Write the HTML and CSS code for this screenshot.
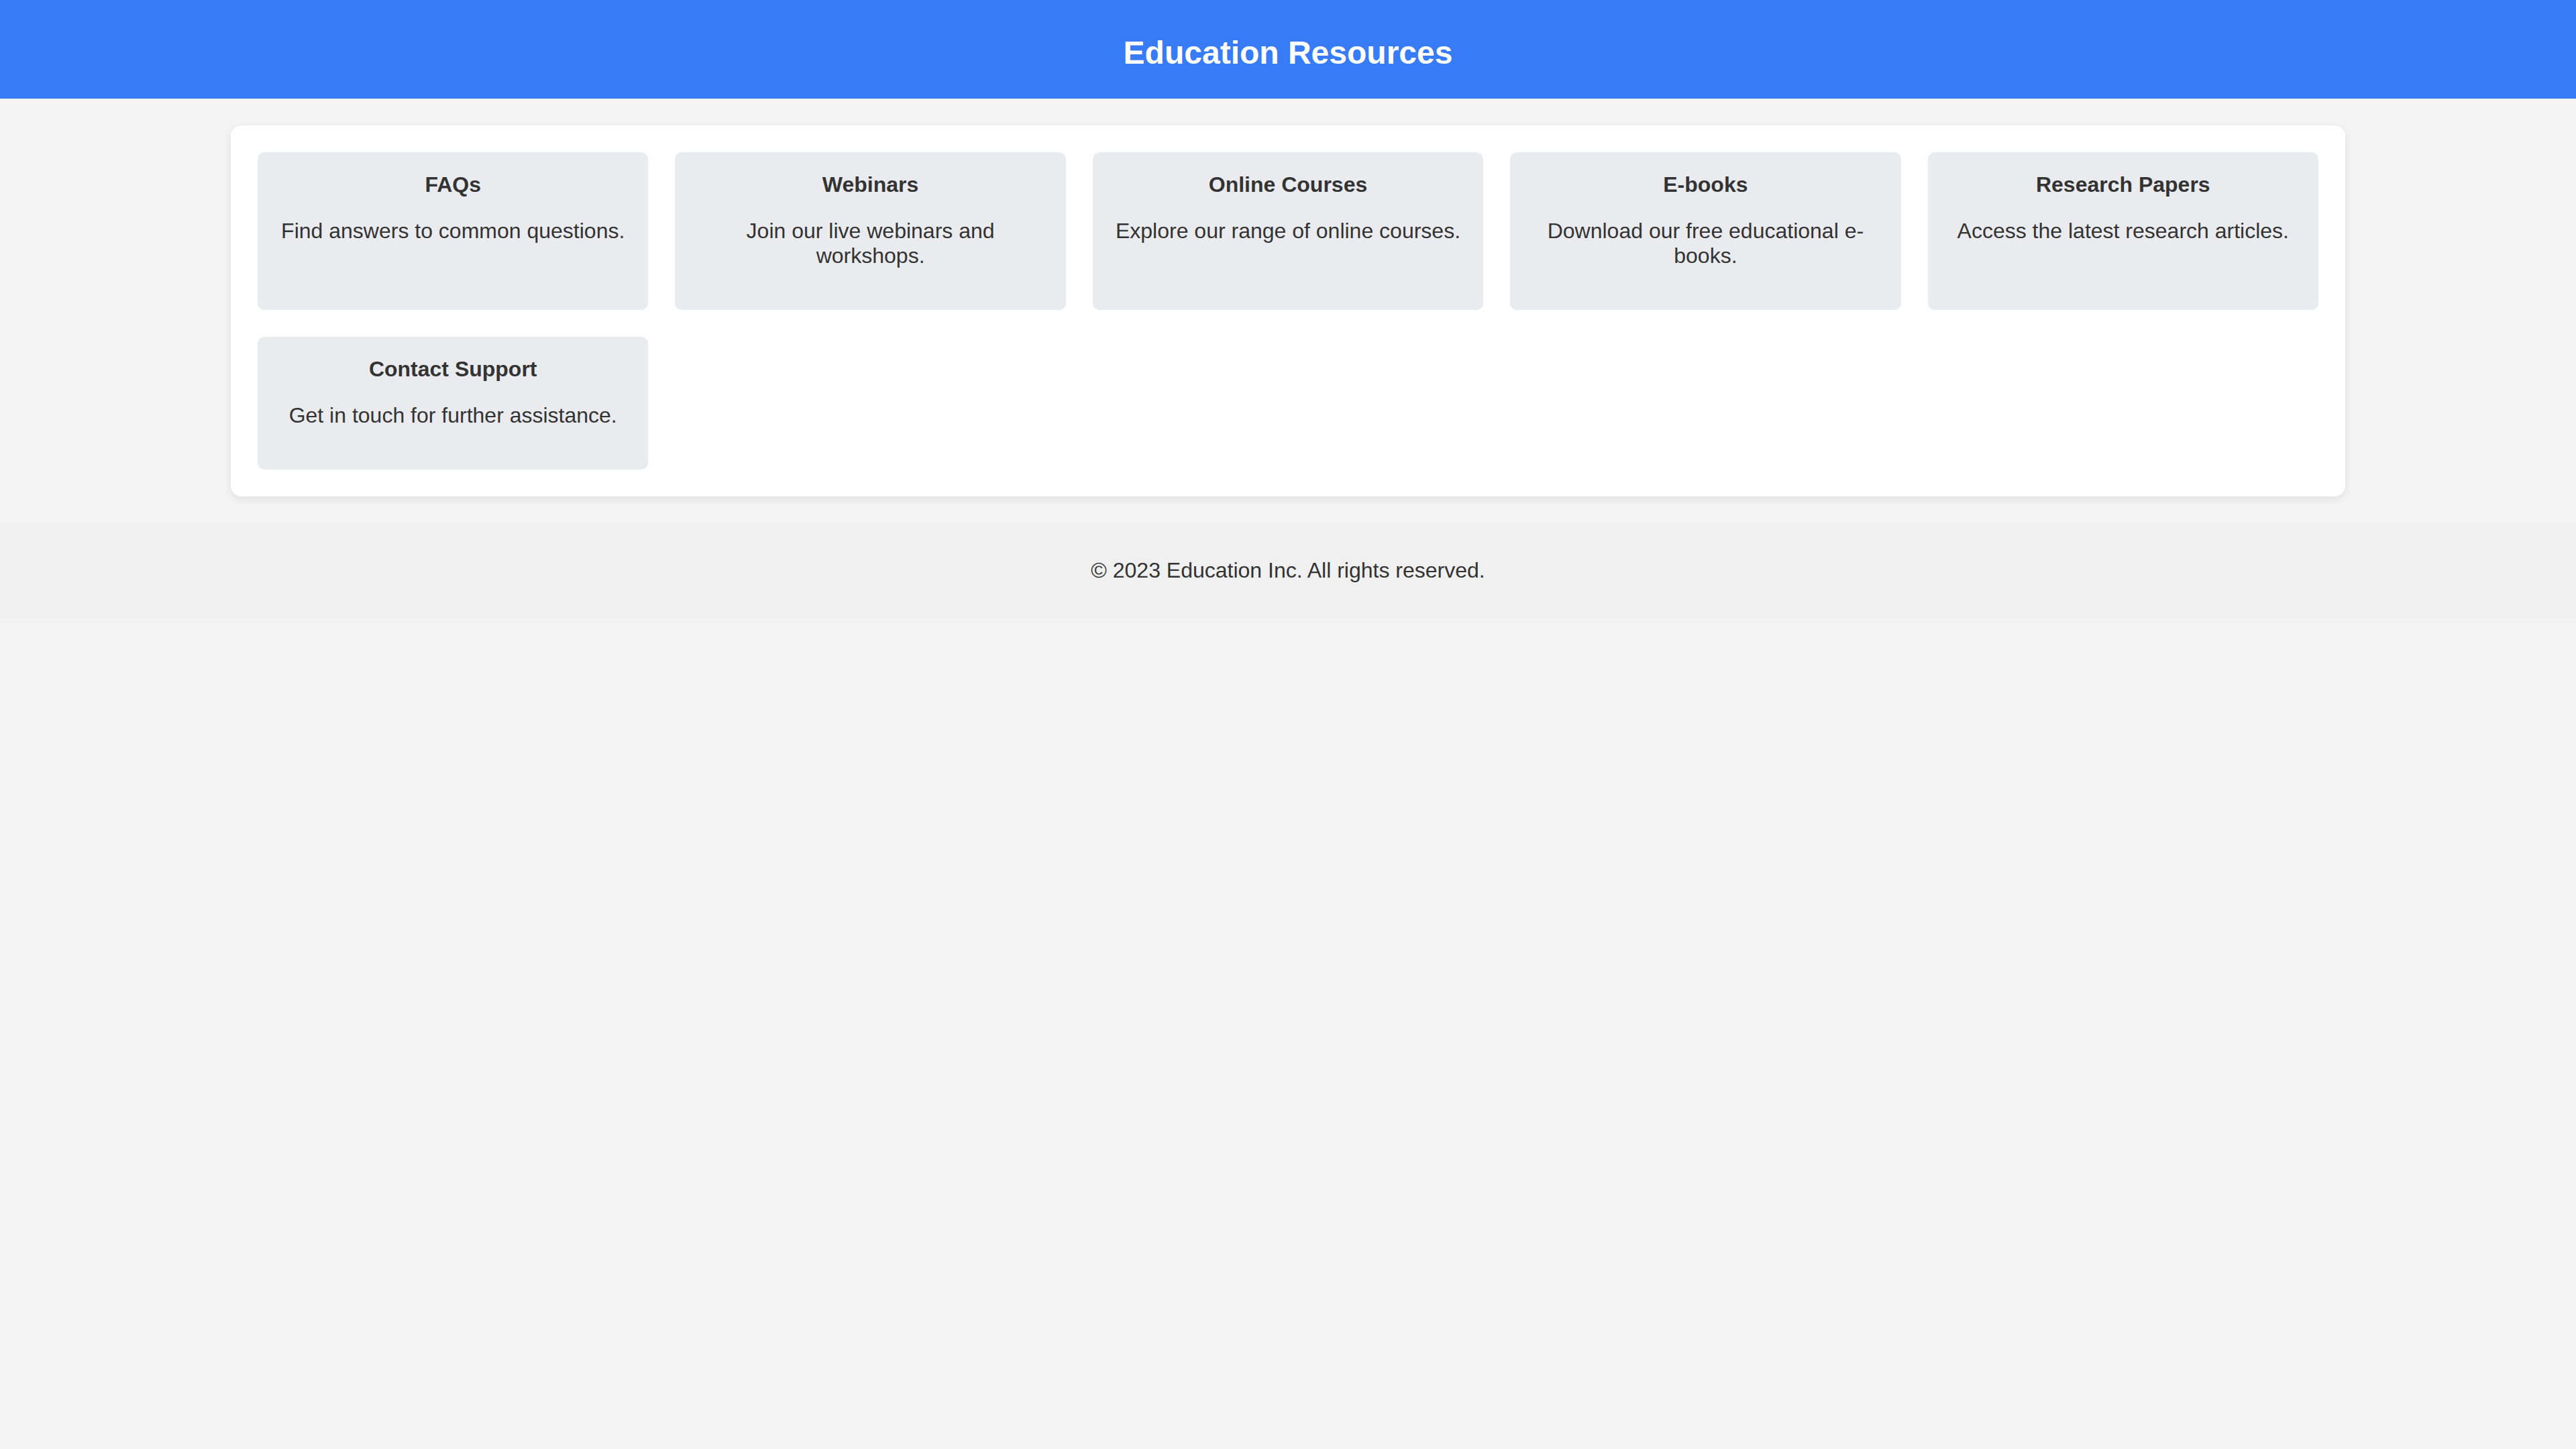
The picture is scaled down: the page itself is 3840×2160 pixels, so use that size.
FILE: index.html
```html
<!DOCTYPE html>
<html lang="en">
<head>
<meta charset="utf-8">
<title>Education Resources</title>
<link rel="stylesheet" href="styles.css">
</head>
<body>
<header class="site-header">
  <h1 class="site-title">Education Resources</h1>
</header>
<main class="panel">
  <div class="grid">
    <div class="card">
      <h3 class="card-title">FAQs</h3>
      <p class="card-text">Find answers to common questions.</p>
    </div>
    <div class="card">
      <h3 class="card-title">Webinars</h3>
      <p class="card-text">Join our live webinars and workshops.</p>
    </div>
    <div class="card">
      <h3 class="card-title">Online Courses</h3>
      <p class="card-text">Explore our range of online courses.</p>
    </div>
    <div class="card">
      <h3 class="card-title">E-books</h3>
      <p class="card-text">Download our free educational e-books.</p>
    </div>
    <div class="card">
      <h3 class="card-title">Research Papers</h3>
      <p class="card-text">Access the latest research articles.</p>
    </div>
    <div class="card">
      <h3 class="card-title">Contact Support</h3>
      <p class="card-text">Get in touch for further assistance.</p>
    </div>
  </div>
</main>
<footer class="site-footer">
  <p class="footer-text">&copy; 2023 Education Inc. All rights reserved.</p>
</footer>
</body>
</html>
```

FILE: styles.css
```css
* { box-sizing: border-box; }

html, body {
  margin: 0;
  padding: 0;
}

body {
  background: #f3f3f3;
  font-family: "Liberation Sans", Arial, Helvetica, sans-serif;
  font-size: 32px;
  color: #333333;
}

.site-header {
  background: #377bf6;
  color: #ffffff;
  text-align: center;
  padding: 52px 0 41px;
}

.site-title {
  margin: 0;
  font-size: 48px;
  font-weight: bold;
  line-height: 54px;
}

.panel {
  width: 3152px;
  margin: 40px auto;
  background: #ffffff;
  border-radius: 16px;
  padding: 40px;
  box-shadow: 0 4px 12px rgba(0, 0, 0, 0.08);
}

.grid {
  display: grid;
  grid-template-columns: repeat(5, 1fr);
  gap: 40px;
}

.card {
  background: #eaebef;
  border-radius: 10px;
  padding: 30px;
  text-align: center;
}

.card-title {
  margin: 0 0 30px;
  font-size: 32px;
  font-weight: bold;
  color: #333333;
}

.card-text {
  margin: 32px 0;
  font-size: 32px;
  color: #333333;
}

.site-footer {
  background: #f0f0f0;
  text-align: center;
  padding: 52px 0;
}

.footer-text {
  margin: 0;
  font-size: 32px;
  color: #333333;
}
```
